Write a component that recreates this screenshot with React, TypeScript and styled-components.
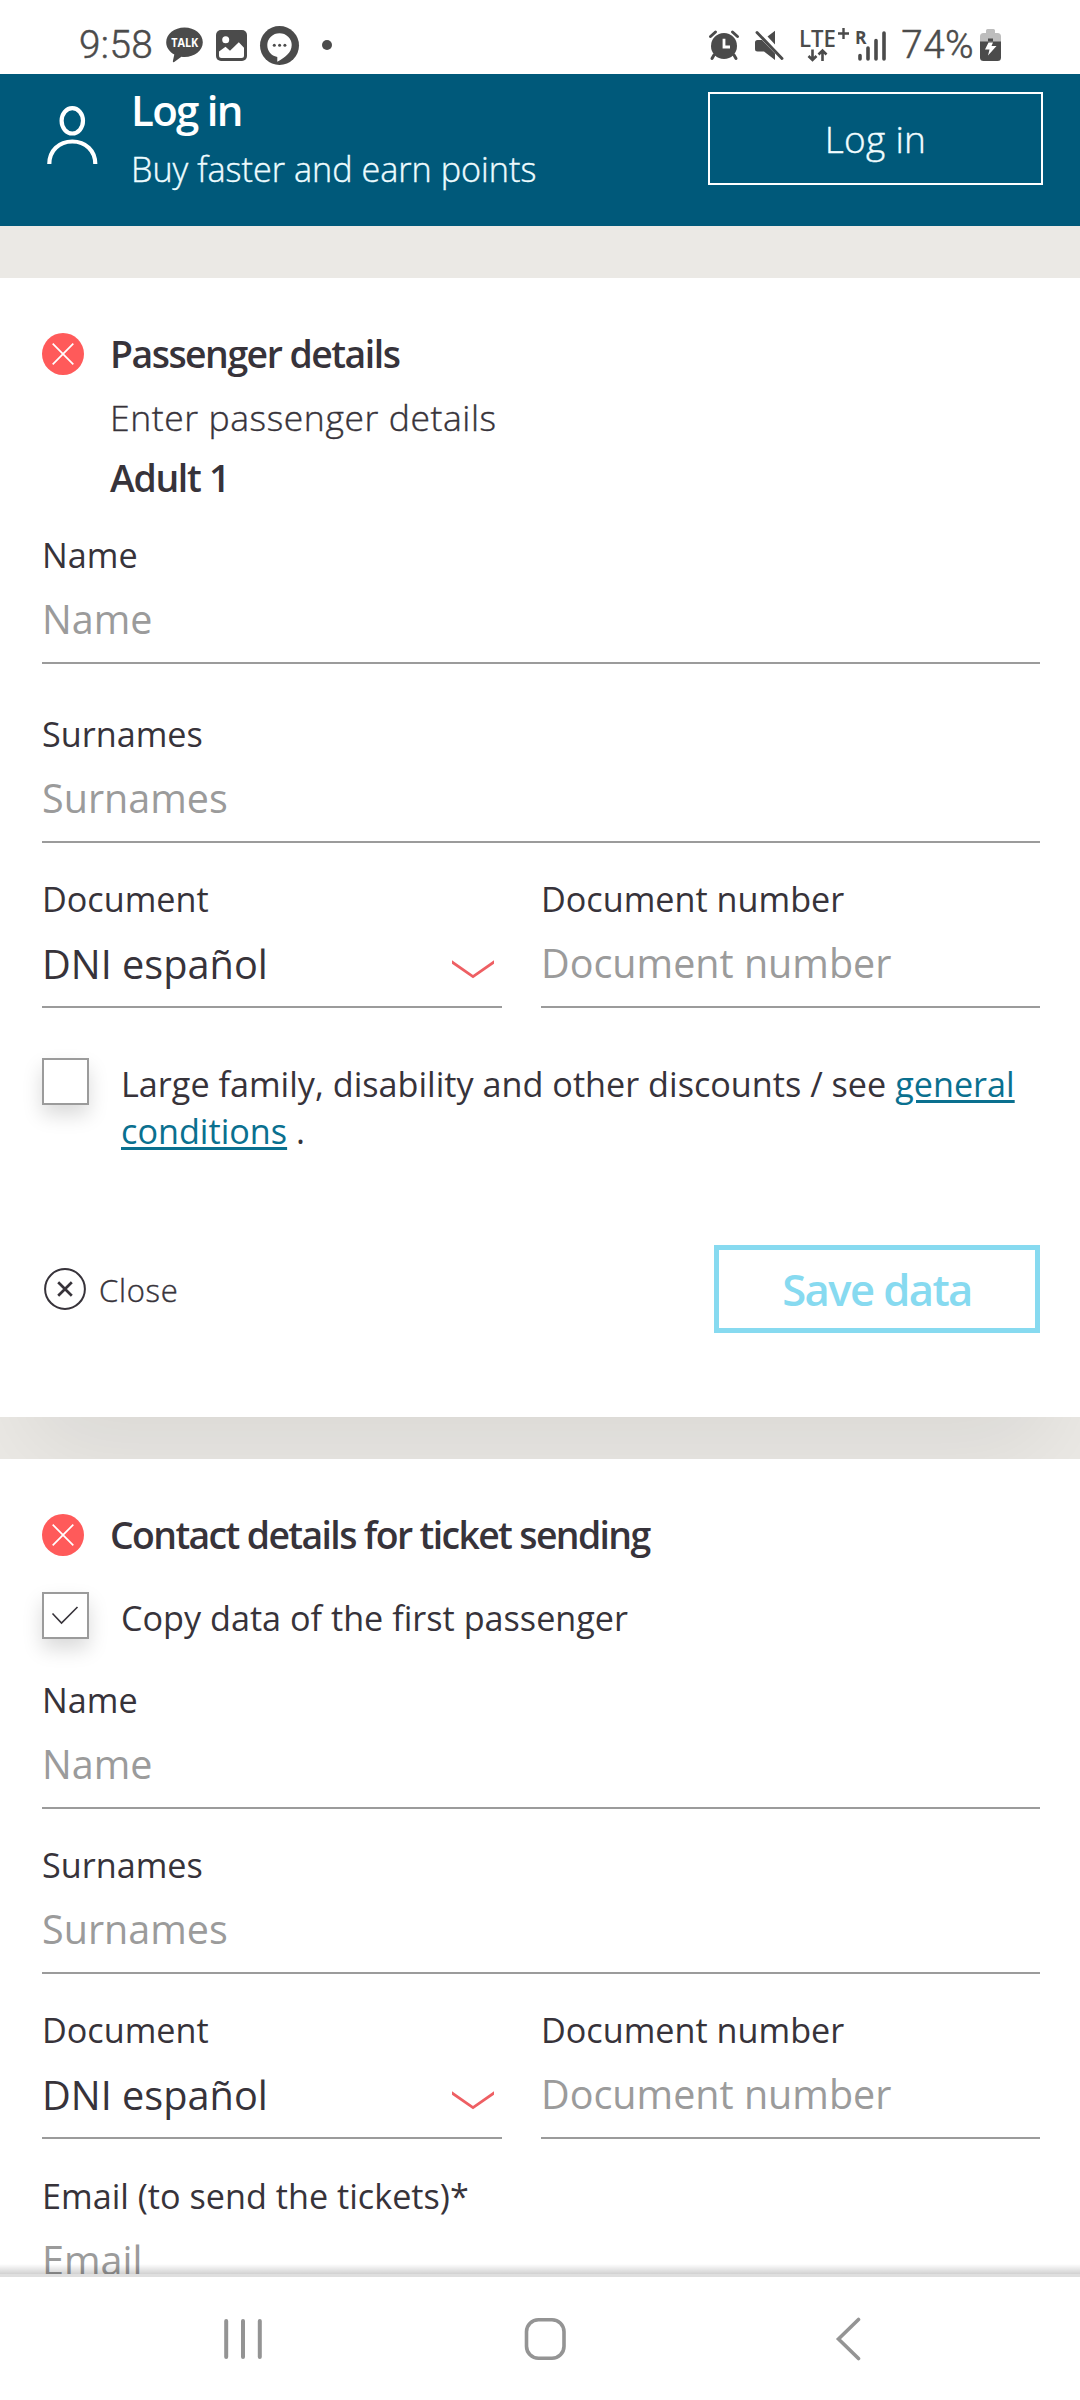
import React from 'react';
import styled, { createGlobalStyle, css } from 'styled-components';

const ink = '#37333a';
const muted = '#9b9b9b';
const glyph = '#4b4b4b';

const GlobalStyle = createGlobalStyle`
  * { box-sizing: border-box; }
  body { margin: 0; background: #fff; }
`;

const Screen = styled.div`
  display: flex;
  flex-direction: column;
  width: 1080px;
  height: 2400px;
  overflow: hidden;
  background: #fff;
  color: ${ink};
  font-family: 'Open Sans', 'Noto Sans', sans-serif;
`;

const StatusBar = styled.header`
  display: flex;
  flex: none;
  align-items: center;
  justify-content: space-between;
  height: 74px;
  padding: 16px 79px 0;
  background: #fff;
`;

const StatusGroup = styled.div<{ $gap: number }>`
  display: flex;
  align-items: center;
  gap: ${(p) => p.$gap}px;
  svg { flex: none; display: block; overflow: visible; }
`;

const StatusText = styled.span`
  font-family: Roboto, sans-serif;
  font-size: 38.7px;
  font-weight: 300;
  line-height: 58px;
  letter-spacing: 0.4px;
  -webkit-text-stroke: 0.5px #4b4b4b;
  color: #4b4b4b;
`;

const Dot = styled.span`
  width: 10px;
  height: 10px;
  margin-left: 10px;
  border-radius: 50%;
  background: ${glyph};
`;

const Page = styled.main`
  flex: 1;
  min-height: 0;
  overflow: hidden;
  background: #ebe9e5;
`;

const LoginBar = styled.section`
  display: flex;
  align-items: flex-start;
  height: 152px;
  padding: 5px 37px 0 47px;
  background: #00597a;
  color: #fff;
`;

const UserIcon = styled.svg`
  flex: none;
  margin: 27px 33px 0 0;
`;

const LoginTitle = styled.div`
  font-size: 42px;
  font-weight: 600;
  line-height: 62px;
  letter-spacing: -1.7px;
`;

/* Thickens the light cut slightly, towards a book weight. */
const bookWeight = css`
  font-weight: 300;
  -webkit-text-stroke: 0.4px currentColor;
`;

const LoginHint = styled.div`
  margin-top: 2px;
  font-size: 34.2px;
  line-height: 52px;
  ${bookWeight}
  color: #eefcff;
`;

const LoginButton = styled.button`
  width: 335px;
  height: 93px;
  margin: 13px 0 0 auto;
  padding: 0;
  border: 2px solid #fff;
  background: transparent;
  color: #f2fdff;
  font: 300 37px 'Open Sans', sans-serif;
  letter-spacing: 0.3px;
  ${bookWeight}
`;

const Panel = styled.section<{ $last?: boolean }>`
  margin-top: ${(p) => (p.$last ? 42 : 52)}px;
  padding: 50px 40px 84px 42px;
  background: #fff;
  ${(p) =>
    !p.$last &&
    css`
      box-shadow: 0 62px 90px -30px rgba(0, 0, 0, 0.08);
      clip-path: inset(0 0 -42px 0);
    `}
`;

const TitleRow = styled.div`
  display: flex;
  align-items: center;
  gap: 26px;
  height: 50px;
  svg { margin-top: 2px; }
`;

const Title = styled.h2<{ $tracking: number }>`
  margin: 0;
  padding-top: 2px;
  font-size: 37.4px;
  font-weight: 600;
  line-height: 50px;
  letter-spacing: ${(p) => p.$tracking}px;
`;

const Intro = styled.p`
  margin: 11px 0 5px 68px;
  font-size: 35.5px;
  line-height: 56px;
  letter-spacing: 0.58px;
  ${bookWeight}
`;

const PassengerName = styled.h3`
  margin: 0 0 25px 68px;
  font-size: 37.4px;
  font-weight: 600;
  line-height: 56px;
  letter-spacing: -1.3px;
`;

const FieldBox = styled.label<{ $gap?: number }>`
  display: block;
  margin-bottom: ${(p) => p.$gap ?? 32}px;
`;

const FieldLabel = styled.span`
  display: block;
  padding-top: 2px;
  font-size: 34.2px;
  line-height: 44px;
  white-space: nowrap;
`;

const control = css`
  display: flex;
  width: 100%;
  height: 87px;
  padding: 1px 0 2px;
  border: 0;
  border-bottom: 2px solid ${muted};
  border-radius: 0;
  outline: 0;
  background: transparent;
  font: 400 39.5px 'Open Sans', sans-serif;
  color: ${ink};
`;

const TextInput = styled.input`
  ${control}
  &::placeholder { color: ${muted}; opacity: 1; }
`;

const SelectBox = styled.div`
  ${control}
  align-items: center;
  justify-content: space-between;
  padding: 2px 8px 1px 0;
  font-size: 39.7px;
  line-height: 82px;
  svg { margin-top: 11px; }
`;

const DocumentRow = styled.div`
  display: grid;
  grid-template-columns: 460px 499px;
  column-gap: 39px;
`;

const CheckRow = styled.div<{ $top: number; $bottom: number }>`
  display: flex;
  gap: 32px;
  margin: ${(p) => p.$top}px 0 ${(p) => p.$bottom}px;
`;

const CheckBox = styled.span`
  flex: none;
  width: 47px;
  height: 47px;
  border: 2px solid ${muted};
  background: #fff;
  box-shadow: 0 10px 20px rgba(0, 0, 0, 0.15);
  svg { display: block; }
`;

const CheckText = styled.span`
  padding-top: 2px;
  font-size: 34.2px;
  line-height: 47px;
`;

const TermsLink = styled.a`
  color: #0a708f;
  text-decoration: underline;
  text-decoration-thickness: 3px;
  text-underline-offset: 3px;
`;

const Actions = styled.div`
  display: flex;
  align-items: center;
  justify-content: space-between;
`;

const CloseButton = styled.button`
  display: flex;
  align-items: center;
  gap: 13px;
  margin-left: 2px;
  padding: 0;
  border: 0;
  background: none;
  color: ${ink};
  font: 300 31px/40px 'Open Sans', sans-serif;
  letter-spacing: 0.7px;
  span {
    padding-top: 2px;
    ${bookWeight}
  }
`;

const SaveButton = styled.button`
  width: 326px;
  height: 88px;
  padding: 0;
  border: 5px solid #87daf0;
  background: #fff;
  color: #87daf0;
  font: 600 43.6px 'Open Sans', sans-serif;
  letter-spacing: -1.6px;
`;

const NavBar = styled.nav`
  position: relative;
  display: flex;
  flex: none;
  align-items: center;
  justify-content: space-between;
  height: 126px;
  padding: 0 210px 0 221px;
  border-top: 3px solid #dfdfdf;
  background: #fff;

  &::before {
    content: '';
    position: absolute;
    left: 0;
    right: 0;
    top: -13px;
    height: 10px;
    background: linear-gradient(rgba(0, 0, 0, 0), rgba(0, 0, 0, 0.18));
  }
`;

const TalkIcon = () => (
  <svg width="37" height="36" viewBox="0 0 37 36">
    <path d="M18.5 0.5C28.7 .5 36.8 7 36.8 15.3S28.7 30 18.5 30c-1.1 0-2.1-.1-3.1-.2L8.200 34.900C7.200 35.500 6.700 35 6.900 34.100L8.300 27.500C3.400 25 .2 20.500 .2 15.300 .2 7 8.300 .5 18.500 .5Z" fill={glyph} />
    <text x="5.200" y="20.200" textLength="27" lengthAdjust="spacingAndGlyphs" fill="#fff" fontFamily="Open Sans, sans-serif" fontWeight="700" fontSize="12.200">TALK</text>
  </svg>
);

const PictureIcon = () => (
  <svg width="31" height="31" viewBox="0 0 31 31">
    <rect width="31" height="31" rx="5" fill={glyph} />
    <circle cx="9.700" cy="9.700" r="3.500" fill="#fff" />
    <path d="M3 21.500 9.500 16.800 14 20.800 22.800 12.300 28 17.700V25.500Q28 28 25.500 28H5.500Q3 28 3 25.500Z" fill="#fff" />
  </svg>
);

const ChatIcon = () => (
  <svg width="39" height="39" viewBox="0 0 39 39">
    <circle cx="19.500" cy="19.500" r="19.500" fill={glyph} />
    <path d="M19.500 7.200A12.200 11.900 0 0 1 31.700 19.100C31.700 27 24.500 31.800 17.300 35.800V31C11 30 7.300 25 7.300 19.100A12.200 11.900 0 0 1 19.500 7.200Z" fill="#fff" />
    <circle cx="14.300" cy="19.300" r="1.500" fill={glyph} />
    <circle cx="19.600" cy="19.300" r="1.500" fill={glyph} />
    <circle cx="24.900" cy="19.300" r="1.500" fill={glyph} />
  </svg>
);

const AlarmIcon = () => (
  <svg width="30" height="30" viewBox="0 0 30 30">
    <circle cx="15" cy="16" r="13" fill={glyph} />
    <path d="M1.500 6.500 6.500 2M28.500 6.500 23.500 2M5 25 3 28.500M25 25 27 28.500" stroke={glyph} strokeWidth="3" strokeLinecap="round" />
    <path d="M15 8.800V17H21" fill="none" stroke="#fff" strokeWidth="2.800" />
  </svg>
);

const MuteIcon = () => (
  <svg width="30" height="31" viewBox="0 0 30 31">
    <path d="M3.500 10H8L21 23.500V30L10 21.500H3.500Q1 21.500 1 19V12.500Q1 10 3.500 10ZM13.500 6.500 21 .8V14.500Z" fill={glyph} />
    <path d="M3 2.500 28 28.500" stroke={glyph} strokeWidth="2.900" strokeLinecap="round" />
  </svg>
);

const LteIcon = () => (
  <svg width="50" height="36" viewBox="0 0 50 36">
    <text x="0" y="19.500" textLength="37" lengthAdjust="spacingAndGlyphs" fill={glyph} fontFamily="Open Sans, sans-serif" fontWeight="600" fontSize="23.500">LTE</text>
    <path d="M39 6.500H50M44.500 1V12" stroke={glyph} strokeWidth="2.400" />
    <path d="M13.500 22.500V32M9.500 29 13.500 33 17.500 29M23.500 34V24.500M19.500 27.500 23.500 23.500 27.500 27.500" fill="none" stroke={glyph} strokeWidth="2.600" />
  </svg>
);

const SignalIcon = () => (
  <svg width="31" height="34" viewBox="0 0 31 34">
    <text x="0" y="15.500" fill={glyph} fontFamily="Open Sans, sans-serif" fontWeight="700" fontSize="17.500">R</text>
    <path d="M5 27.500V31M13 20V31M21 12.500V31M29 5V31" stroke={glyph} strokeWidth="3.600" strokeLinecap="round" />
  </svg>
);

const BatteryIcon = () => (
  <svg width="21" height="32" viewBox="0 0 21 32">
    <path d="M6 1.500Q6 0 7.500 0H13.500Q15 0 15 1.500V4H17.500Q21 4 21 7.500V14H0V7.500Q0 4 3.500 4H6Z" fill="#bdbdbd" />
    <path d="M0 12.500H21V28.500Q21 32 17.500 32H3.500Q0 32 0 28.500Z" fill={glyph} />
    <path d="M8 9.500H13V12.500H8Z" fill={glyph} />
    <path d="M8.500 13.500H13L11.500 17H16.500L8 26.500 9.500 20.500H5Z" fill="#fff" />
  </svg>
);

const ErrorMark = () => (
  <svg width="42" height="42" viewBox="0 0 42 42">
    <circle cx="21" cy="21" r="21" fill="#ff5a5a" />
    <path d="M10.700 10.700 31.300 31.300M31.300 10.700 10.700 31.300" stroke="#fff" strokeWidth="1.700" />
  </svg>
);

const Chevron = () => (
  <svg width="42" height="19" viewBox="0 0 42 19">
    <path d="M-1 1.300 21 16.500 43 1.300" fill="none" stroke="#ee5f63" strokeWidth="2.700" />
  </svg>
);

const Field = ({ label, placeholder, gap }: { label: string; placeholder: string; gap?: number }) => (
  <FieldBox $gap={gap}>
    <FieldLabel>{label}</FieldLabel>
    <TextInput placeholder={placeholder} />
  </FieldBox>
);

const DocumentFields = ({ gap }: { gap?: number }) => (
  <DocumentRow>
    <FieldBox as="div" $gap={gap}>
      <FieldLabel>Document</FieldLabel>
      <SelectBox>
        <span>DNI español</span>
        <Chevron />
      </SelectBox>
    </FieldBox>
    <Field label="Document number" placeholder="Document number" gap={gap} />
  </DocumentRow>
);

export default function App() {
  return (
    <>
      <GlobalStyle />
      <Screen>
        <StatusBar>
          <StatusGroup $gap={13}>
            <StatusText>9:58</StatusText>
            <TalkIcon />
            <PictureIcon />
            <ChatIcon />
            <Dot />
          </StatusGroup>
          <StatusGroup $gap={6}>
            <StatusGroup $gap={15}>
              <AlarmIcon />
              <MuteIcon />
              <LteIcon />
            </StatusGroup>
            <StatusGroup $gap={15}>
              <SignalIcon />
              <StatusText>74%</StatusText>
            </StatusGroup>
            <BatteryIcon />
          </StatusGroup>
        </StatusBar>

        <Page>
          <LoginBar>
            <UserIcon width="51" height="59" viewBox="0 0 51 59" fill="none" stroke="#fff" strokeWidth="4.200">
              <ellipse cx="25.300" cy="14.800" rx="10.700" ry="12.700" />
              <path d="M2.300 58C2.300 44.500 12 35.500 25.300 35.500S48.300 44.500 48.300 58" />
            </UserIcon>
            <div>
              <LoginTitle>Log in</LoginTitle>
              <LoginHint>Buy faster and earn points</LoginHint>
            </div>
            <LoginButton>Log in</LoginButton>
          </LoginBar>

          <Panel>
            <TitleRow>
              <ErrorMark />
              <Title $tracking={-1.5}>Passenger details</Title>
            </TitleRow>
            <Intro>Enter passenger details</Intro>
            <PassengerName>Adult 1</PassengerName>
            <Field label="Name" placeholder="Name" gap={46} />
            <Field label="Surnames" placeholder="Surnames" />
            <DocumentFields gap={0} />
            <CheckRow $top={50} $bottom={91}>
              <CheckBox />
              <CheckText>
                Large family, disability and other discounts / see <TermsLink>general conditions</TermsLink> .
              </CheckText>
            </CheckRow>
            <Actions>
              <CloseButton>
                <svg width="42" height="42" viewBox="0 0 42 42" fill="none" stroke={ink}>
                  <circle cx="21" cy="21" r="19.900" strokeWidth="2" />
                  <path d="M14.200 14.200 27.800 27.800M27.800 14.200 14.200 27.800" strokeWidth="2.700" />
                </svg>
                <span>Close</span>
              </CloseButton>
              <SaveButton>Save data</SaveButton>
            </Actions>
          </Panel>

          <Panel $last>
            <TitleRow>
              <ErrorMark />
              <Title $tracking={-1.63}>Contact details for ticket sending</Title>
            </TitleRow>
            <CheckRow $top={33} $bottom={35}>
              <CheckBox>
                <svg width="43" height="43" viewBox="2 2 43 43">
                  <path d="M10.500 21.500 19.500 31 35.500 15" fill="none" stroke={ink} strokeWidth="1.600" />
                </svg>
              </CheckBox>
              <CheckText>Copy data of the first passenger</CheckText>
            </CheckRow>
            <Field label="Name" placeholder="Name" />
            <Field label="Surnames" placeholder="Surnames" />
            <DocumentFields gap={33} />
            <Field label="Email (to send the tickets)*" placeholder="Email" />
          </Panel>
        </Page>

        <NavBar>
          <svg width="44" height="44" viewBox="0 0 44 44">
            <path d="M5.200 4V40M22 4V40M38.800 4V40" stroke="#949494" strokeWidth="4" strokeLinecap="round" />
          </svg>
          <svg width="44" height="44" viewBox="0 0 44 44">
            <rect x="2.500" y="2.800" width="37.500" height="38.400" rx="12" fill="none" stroke="#949494" strokeWidth="3.600" />
          </svg>
          <svg width="44" height="44" viewBox="0 0 44 44">
            <path d="M32.500 2.500 12.500 22 32.500 41.500" fill="none" stroke="#949494" strokeWidth="3.600" strokeLinecap="round" />
          </svg>
        </NavBar>
      </Screen>
    </>
  );
}
